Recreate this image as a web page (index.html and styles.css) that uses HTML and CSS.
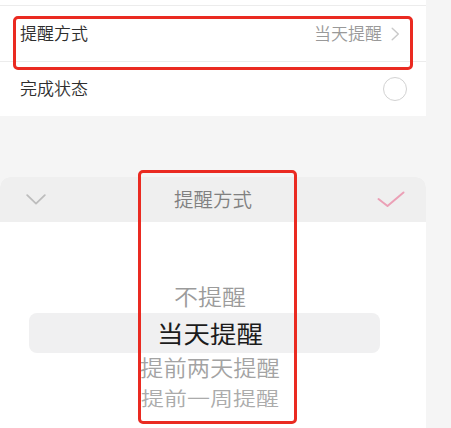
FILE: index.html
```html
<!DOCTYPE html>
<html lang="zh-CN">
<head>
<meta charset="utf-8">
<title>提醒方式</title>
<link rel="stylesheet" href="styles.css">
</head>
<body>
<div class="page">
  <div class="main">
    <div class="card">
      <div class="stub"></div>
      <div class="row row-first">
        <span class="label">提醒方式</span>
        <span class="value">当天提醒</span>
        <svg class="arrow" width="9" height="14" viewBox="0 0 9 14"><path d="M1.2 1.2 L7.3 7 L1.2 12.8" fill="none" stroke="#c9c9c9" stroke-width="1.4" stroke-linecap="round" stroke-linejoin="round"/></svg>
      </div>
      <div class="row row-last">
        <span class="label">完成状态</span>
        <span class="radio"></span>
      </div>
    </div>
    <div class="gap"></div>
    <div class="sheet">
      <div class="sheet-head">
        <svg class="down" width="20" height="11" viewBox="0 0 20 11"><path d="M1.2 1.2 L10 9.6 L18.8 1.2" fill="none" stroke="#bdbdbd" stroke-width="1.8" stroke-linecap="round" stroke-linejoin="round"/></svg>
        <span class="title">提醒方式</span>
        <svg class="check" width="28" height="17" viewBox="0 0 28 17"><path d="M1.5 8 L10.5 15 L26.5 1.5" fill="none" stroke="#eba0b6" stroke-width="2" stroke-linecap="round" stroke-linejoin="round"/></svg>
      </div>
      <div class="picker">
        <div class="opt opt-1"><span>不提醒</span></div>
        <div class="opt opt-sel"><span>当天提醒</span></div>
        <div class="opt opt-3"><span>提前两天提醒</span></div>
        <div class="opt opt-4"><span>提前一周提醒</span></div>
      </div>
    </div>
  </div>
  <div class="side"></div>
  <div class="mark mark-row"></div>
  <div class="mark mark-picker"></div>
</div>
</body>
</html>
```

FILE: styles.css
```css
* { box-sizing: border-box; }
html, body {
  margin: 0;
  padding: 0;
  background: #f5f5f5;
  font-family: "Noto Sans CJK SC", "Noto Sans", sans-serif;
  font-weight: 350;
}
.page {
  position: relative;
  width: 451px;
  height: 428px;
  display: flex;
  overflow: hidden;
}
.main {
  width: 426px;
  display: flex;
  flex-direction: column;
}
.side {
  flex: 1;
  background: #f5f5f5;
}
.card {
  background: #fff;
}
.stub {
  height: 6px;
  border-bottom: 1px solid #ececec;
}
.row {
  display: flex;
  align-items: center;
  padding: 0 19px 0 20px;
}
.row-first {
  height: 56px;
  border-bottom: 1px solid #ececec;
  padding-right: 26px;
}
.row-last {
  height: 54px;
}
.label {
  flex: 1;
  font-size: 17px;
  color: #2e2e2e;
  line-height: 1;
  padding-bottom: 3px;
}
.value {
  font-size: 17px;
  color: #999;
  line-height: 1;
  margin-right: 9px;
  padding-bottom: 3px;
}
.arrow {
  display: block;
}
.radio {
  width: 24px;
  height: 24px;
  border: 1px solid #d2d2d2;
  border-radius: 50%;
}
.gap {
  height: 61px;
}
.sheet {
  flex: 1;
  display: flex;
  flex-direction: column;
  background: #fff;
  border-radius: 10px 10px 0 0;
  overflow: hidden;
}
.sheet-head {
  height: 45px;
  background: #efefef;
  display: grid;
  grid-template-columns: 1fr auto 1fr;
  align-items: center;
}
.down {
  justify-self: start;
  margin-left: 26px;
  display: block;
}
.check {
  justify-self: end;
  margin-right: 21px;
  display: block;
}
.title {
  font-size: 19.5px;
  color: #808080;
  line-height: 1;
  padding-bottom: 2px;
}
.picker {
  flex: 1;
  padding-top: 56px;
  display: flex;
  flex-direction: column;
  padding-right: 6px;
}
.opt {
  display: flex;
  justify-content: center;
  align-items: center;
  white-space: nowrap;
}
.opt span {
  display: inline-block;
  line-height: 1;
}
.opt-1 {
  height: 35px;
  font-size: 24px;
  color: #9b9b9b;
}
.opt-1 span { transform: scaleY(0.88); }
.opt-sel {
  height: 40px;
  margin-left: 29px;
  width: 351px;
  padding-left: 11px;
  border-radius: 8px;
  background: #f0f0f1;
  font-size: 26.5px;
  font-weight: 400;
  color: #1c1c1c;
}
.opt-sel span { transform: scaleY(0.88); }
.opt-3 {
  height: 30px;
  font-size: 23.3px;
  color: #a3a3a3;
}
.opt-3 span { transform: scaleY(0.92); }
.opt-4 {
  height: 31px;
  font-size: 23px;
  color: #ababab;
}
.opt-4 span { transform: scaleY(0.82); }
.mark {
  position: absolute;
  border: 3px solid #ea2a21;
  border-radius: 5px;
  pointer-events: none;
}
.mark-row {
  left: 13px;
  top: 16px;
  width: 400px;
  height: 54px;
}
.mark-picker {
  left: 138px;
  top: 170px;
  width: 159px;
  height: 254px;
}
```
